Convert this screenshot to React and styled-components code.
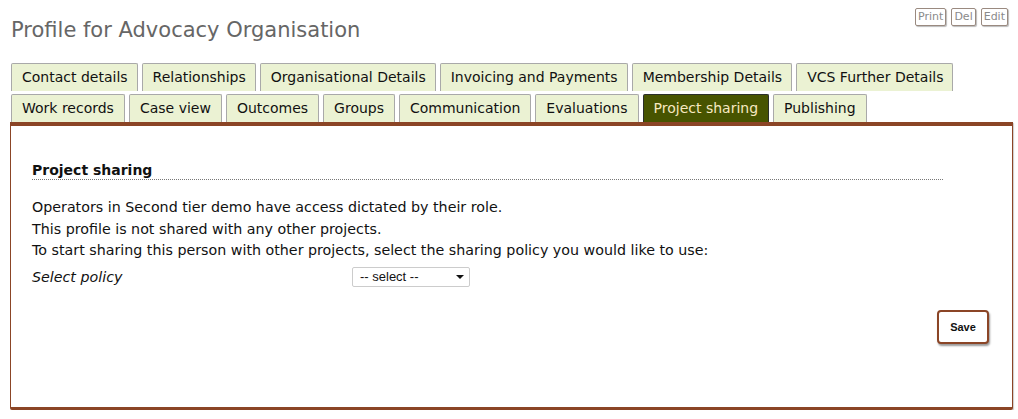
import React from "react";
import styled, { createGlobalStyle, css } from "styled-components";

const GlobalStyle = createGlobalStyle`
  body {
    margin: 0;
    background: #fff;
    font-family: "DejaVu Sans", Verdana, sans-serif;
  }
`;

const Page = styled.div`
  padding: 8px 5px 0 10px;
`;

const Header = styled.div`
  display: flex;
  justify-content: space-between;
  align-items: flex-start;
  height: 55px;
`;

const Title = styled.h1`
  margin: 10px 0 0 1px;
  font-size: 21px;
  font-weight: normal;
  color: #666;
`;

const Actions = styled.div`
  display: flex;
  gap: 5px;
  margin-right: 5px;
`;

const SmallButton = styled.button`
  font-family: "DejaVu Sans", Verdana, sans-serif;
  font-size: 11px;
  color: #8a8a8a;
  background: #fff;
  border: 1px solid #9a8a80;
  border-radius: 2px;
  padding: 0 2px;
  height: 18px;
  line-height: 16px;
  box-shadow: 1px 1px 1px #bbb;
`;

const TabRow = styled.div`
  display: flex;
  gap: 4px;
  margin-left: 1px;
  margin-bottom: 3px;
`;

const Tab = styled.div`
  height: 27px;
  line-height: 27px;
  padding: ${(p) => (p.$wide ? "0 10px" : "0 9px 0 10px")};
  font-size: 14px;
  color: #111;
  background: #ebf2d3;
  border: 1px solid #a9a9a9;
  border-bottom: none;
  border-radius: 2px 2px 0 0;
  white-space: nowrap;
  ${(p) =>
    p.$active &&
    css`
      background: #475400;
      color: #f7e9c0;
      border-color: #2b2f2a;
    `}
`;

const Panel = styled.div`
  margin-top: -3px;
  border: 1px solid #8b4526;
  border-top: 4px solid #8b4526;
  border-bottom: 3px solid #8b4526;
  border-radius: 0 0 2px 2px;
  box-shadow: 1px 1px 1px #ccc;
  height: 281px;
  padding: 0 23px 0 21px;
`;

const Section = styled.div`
  width: 911px;
  padding-top: 36px;
`;

const Heading = styled.h2`
  margin: 0;
  font-size: 14px;
  font-weight: bold;
  color: #111;
  padding-bottom: 1px;
  border-bottom: 1px dotted #777;
`;

const Text = styled.p`
  margin: 0;
  font-size: 14.25px;
  line-height: 21.5px;
  color: #111;
`;

const Intro = styled.div`
  margin-top: 17px;
`;

const FieldRow = styled.div`
  display: flex;
  align-items: center;
  margin-top: 4px;
`;

const Label = styled.div`
  width: 320px;
  font-size: 14.25px;
  font-style: italic;
  color: #111;
  margin-top: 2px;
`;

const Select = styled.div`
  width: 118px;
  height: 20px;
  border: 1px solid #ccc;
  border-radius: 2px;
  display: flex;
  align-items: center;
  justify-content: space-between;
  padding: 0 5px 0 7px;
  box-sizing: border-box;
  margin-top: 1px;
  font-family: "Liberation Sans", Arial, sans-serif;
  font-size: 13px;
  color: #111;
`;

const Arrow = styled.span`
  width: 0;
  height: 0;
  border-left: 4px solid transparent;
  border-right: 4px solid transparent;
  border-top: 4px solid #111;
`;

const Footer = styled.div`
  display: flex;
  justify-content: flex-end;
  margin-top: 23px;
`;

const SaveButton = styled.button`
  width: 52px;
  height: 34px;
  background: #fff;
  border: 2px solid #8b4526;
  border-radius: 4px;
  box-shadow: 1px 2px 2px #999;
  font-family: "Liberation Sans", Arial, sans-serif;
  font-size: 11px;
  font-weight: bold;
  color: #111;
`;

const rowOne = [
  "Contact details",
  "Relationships",
  "Organisational Details",
  "Invoicing and Payments",
  "Membership Details",
  "VCS Further Details",
];

const rowTwo = [
  "Work records",
  "Case view",
  "Outcomes",
  "Groups",
  "Communication",
  "Evaluations",
  "Project sharing",
  "Publishing",
];

const App = () => {
  const active = "Project sharing";
  return (
    <>
      <GlobalStyle />
      <Page>
        <Header>
          <Title>Profile for Advocacy Organisation</Title>
          <Actions>
            <SmallButton>Print</SmallButton>
            <SmallButton>Del</SmallButton>
            <SmallButton>Edit</SmallButton>
          </Actions>
        </Header>
        <TabRow>
          {rowOne.map((t) => (
            <Tab key={t} $active={t === active}>
              {t}
            </Tab>
          ))}
        </TabRow>
        <TabRow>
          {rowTwo.map((t) => (
            <Tab key={t} $wide $active={t === active}>
              {t}
            </Tab>
          ))}
        </TabRow>
        <Panel>
          <Section>
            <Heading>Project sharing</Heading>
            <Intro>
              <Text>Operators in Second tier demo have access dictated by their role.</Text>
              <Text>This profile is not shared with any other projects.</Text>
              <Text>
                To start sharing this person with other projects, select the sharing policy you would like to use:
              </Text>
            </Intro>
            <FieldRow>
              <Label>Select policy</Label>
              <Select>
                -- select --
                <Arrow />
              </Select>
            </FieldRow>
          </Section>
          <Footer>
            <SaveButton>Save</SaveButton>
          </Footer>
        </Panel>
      </Page>
    </>
  );
};

export default App;
